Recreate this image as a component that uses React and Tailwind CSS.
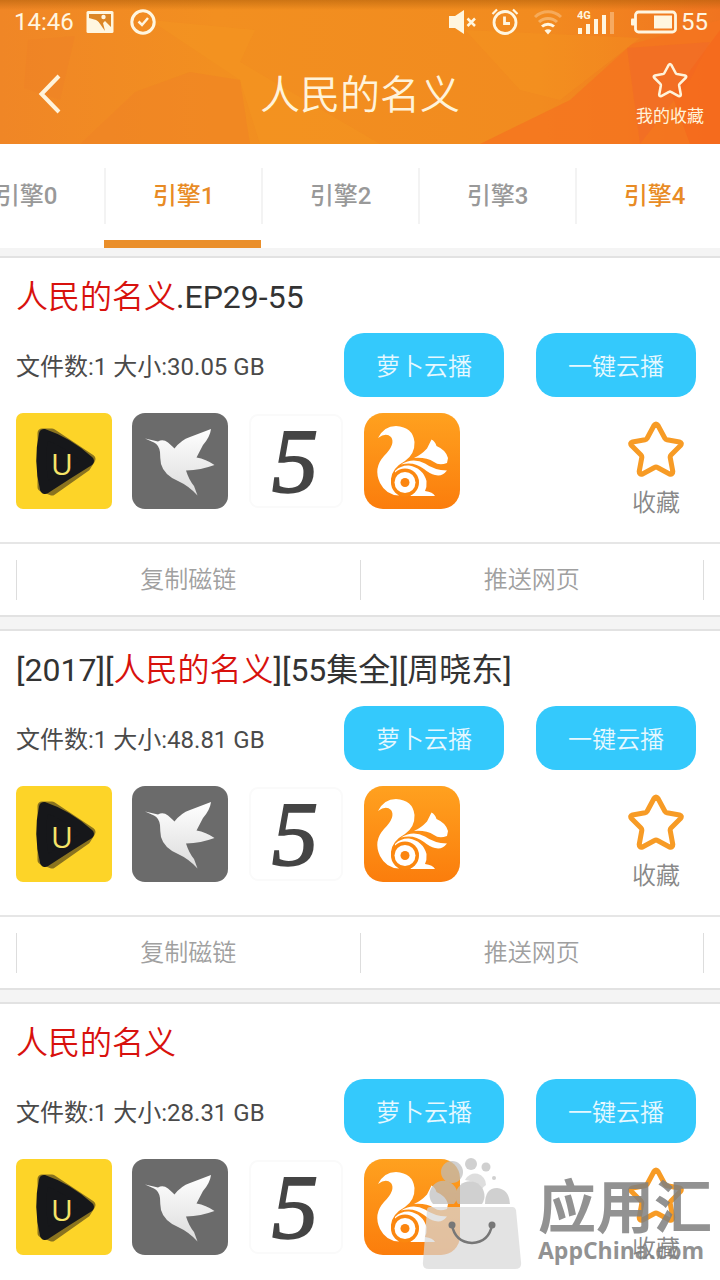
import { useState } from 'react';

const ENGINES = [
  { id: 0, label: '引擎0' },
  { id: 1, label: '引擎1' },
  { id: 2, label: '引擎2' },
  { id: 3, label: '引擎3' },
  { id: 4, label: '引擎4', hot: true }
];

const RESULTS = [
  { id: 1, before: '', after: '.EP29-55', files: 1, size: '30.05 GB' },
  { id: 2, before: '[2017][', after: '][55集全][周晓东]', files: 1, size: '48.81 GB' },
  { id: 3, before: '', after: '', files: 1, size: '28.31 GB' }
];

const KEYWORD = '人民的名义';

function StatusBar() {
  return (
    <div className="relative flex h-11 items-center justify-between pl-3.5 pr-3 text-2xl text-[#fff6e0]">
      <div className="flex items-center">
        <span>14:46</span>
        <svg className="ml-3 h-6 w-7" viewBox="0 0 28 24" fill="none">
          <rect x="0.5" y="1" width="27" height="22" rx="1.5" fill="#fff6e0" />
          <path d="M3 4h22v13L19 11l-3 3L10 10 3 8z" fill="#dc8626" />
          <path d="M12 11l7 10-2-8z" fill="#dc8626" />
          <circle cx="17.5" cy="7" r="2.2" fill="#fff6e0" />
        </svg>
        <svg className="ml-4 h-[26px] w-[26px]" viewBox="0 0 26 26" fill="none" stroke="#fff6e0">
          <circle cx="13" cy="13" r="11.2" strokeWidth="3" />
          <path d="M8.5 12.5l3.5 3.5 6-7" strokeWidth="2.5" />
        </svg>
      </div>
      <div className="flex items-center">
        <svg className="h-6 w-7" viewBox="0 0 28 24" fill="#fff6e0">
          <path d="M0 6h6L15 0v24l-9-6H0z" />
          <path d="M18.5 8.5l7.500 7.500M26 8.500l-7.500 7.500" stroke="#fff6e0" strokeWidth="2.5" />
        </svg>
        <svg className="ml-3.5 h-7 w-7" viewBox="0 0 28 28" fill="none" stroke="#fff6e0" strokeWidth="2.8">
          <circle cx="14" cy="14.500" r="11" />
          <path d="M13.500 8.500v7h5.500" />
          <path d="M1.500 6L6 1.500M22 1.500L26.500 6" strokeWidth="2.2" />
        </svg>
        <svg className="ml-3.5 h-7 w-[30px]" viewBox="0 0 30 28" fill="none" stroke="#fff6e0" strokeWidth="3">
          <path d="M2 9a19 19 0 0 1 26 0" opacity="0.3" />
          <path d="M6 14a13 13 0 0 1 18 0" opacity="0.35" />
          <path d="M9 18.500a9 9 0 0 1 12 0" />
          <path d="M11.500 22.500q3.500-2.500 7 0l-3.500 4z" fill="#fff6e0" stroke="none" />
        </svg>
        <svg className="ml-3.5 h-7 w-[38px]" viewBox="0 0 38 28" fill="#fff6e0">
          <text x="0" y="11" fontSize="11" fontWeight="700">4G</text>
          <rect x="1" y="20" width="4" height="6" />
          <rect x="9" y="16" width="4" height="10" />
          <rect x="17" y="11" width="4" height="15" />
          <rect x="25" y="7" width="4" height="19" />
          <rect x="33" y="4" width="4" height="22" opacity="0.35" />
        </svg>
        <svg className="ml-4 h-6 w-[46px]" viewBox="0 0 46 24" fill="#fff6e0">
          <rect x="4.500" y="2" width="40" height="20" rx="3" fill="none" stroke="#fff6e0" strokeWidth="2.8" />
          <rect x="0" y="8.500" width="4" height="7" rx="1" />
          <rect x="23" y="5.500" width="18" height="13" />
        </svg>
        <span className="ml-1">55</span>
      </div>
    </div>
  );
}

function Star({ className, strokeWidth }) {
  return (
    <svg className={className} viewBox="0 0 56 56" fill="none" stroke="currentColor" strokeWidth={strokeWidth} strokeLinejoin="round" strokeLinecap="round">
      <path d="M26 4.500Q28 1.500 30 4.500L37 17.500Q37.500 18.500 39 18.800L51.500 21Q54.500 21.800 52.500 24.500L43 34Q42 35 42.200 36.500L44.800 50.500Q44.800 54 41.500 53L29.500 46.500Q28 45.600 26.500 46.500L14.500 53Q11.200 54 11.200 50.500L13.800 36.500Q14 35 13 34L3.500 24.500Q1.500 21.800 4.500 21L17 18.800Q18.500 18.500 19 17.500Z" />
    </svg>
  );
}

function Header() {
  return (
    <header className="relative overflow-hidden bg-[#f28c20]">
      <svg className="absolute inset-0 h-full w-full" viewBox="0 0 720 144" preserveAspectRatio="none">
        <defs>
          <linearGradient id="base" x1="0" x2="1" y1="0" y2="0">
            <stop offset="0" stopColor="#f08626" />
            <stop offset="0.3" stopColor="#f28f20" />
            <stop offset="0.75" stopColor="#f28b1f" />
            <stop offset="1" stopColor="#f07420" />
          </linearGradient>
          <linearGradient id="shade" x1="0" x2="0" y1="0" y2="1">
            <stop offset="0" stopColor="#a85a08" stopOpacity="0.5" />
            <stop offset="1" stopColor="#a85a08" stopOpacity="0" />
          </linearGradient>
        </defs>
        <rect width="720" height="144" fill="url(#base)" />
        <path d="M80 144L135 92 190 72 240 80 250 144z" fill="#f08026" opacity="0.45" />
        <path d="M28 40L75 36 60 100 24 88z" fill="#ee7d28" opacity="0.3" />
        <path d="M150 20L255 30 240 62 380 144H260L240 80z" fill="#f59a22" opacity="0.3" />
        <path d="M465 30L640 38 560 100 520 90z" fill="#f69a20" opacity="0.25" />
        <path d="M480 144L570 100 632 44 720 20V144z" fill="#f5741f" opacity="0.8" />
        <path d="M627 48L710 42 690 80 640 144z" fill="#f0682a" opacity="0.45" />
        <path d="M720 30L672 95 690 144H720z" fill="#f5651d" opacity="0.6" />
        <rect width="720" height="10" fill="url(#shade)" />
      </svg>
      <StatusBar />
      <div className="relative grid h-[100px] grid-cols-[1fr_auto_1fr] items-center text-[#fff3da]">
        <button type="button" aria-label="返回" className="ml-9 w-7">
          <svg className="h-10 w-7" viewBox="0 0 28 40" fill="none" stroke="#fff3da" strokeWidth="4">
            <path d="M23 2L5.500 20 23 38" />
          </svg>
        </button>
        <h1 className="pt-1 text-[40px] font-[350] leading-none">{KEYWORD}</h1>
        <button type="button" className="mr-4 flex flex-col items-center justify-self-end">
          <Star className="h-9 w-9" strokeWidth="4" />
          <span className="mt-2 text-[17px] leading-5">我的收藏</span>
        </button>
      </div>
    </header>
  );
}

function EngineTabs({ active, onChange }) {
  return (
    <nav className="-ml-[53px] flex bg-white">
      {ENGINES.map((e) => (
        <button
          key={e.id}
          type="button"
          onClick={() => onChange(e.id)}
          className={`h-[104px] w-[157px] shrink-0 border-b-8 pt-2 text-2xl font-medium ${
            active === e.id ? 'border-[#ea8f2b]' : 'border-transparent'
          } ${active === e.id || e.hot ? 'text-[#e88b25]' : 'text-[#999]'}`}
        >
          <span className="flex h-14 items-center justify-center border-l-2 border-[#f3f3f3]">{e.label}</span>
        </button>
      ))}
    </nav>
  );
}

function PlayerIcon() {
  return (
    <svg className="h-24 w-24" viewBox="0 0 96 96">
      <rect width="96" height="96" rx="7" fill="#fdd428" />
      <path d="M26 20L36 20 75 46 70 54 36 78 26 74z" fill="#8a731f" stroke="#8a731f" strokeWidth="9" strokeLinejoin="round" />
      <path d="M28 21Q52 29 73 48Q52 61 29 76Q22 48 28 21z" fill="#16171a" stroke="#16171a" strokeWidth="10" strokeLinejoin="round" />
      <text x="46" y="62" textAnchor="middle" fontSize="30" fontFamily="Open Sans" fontWeight="400" fill="#f6e468">U</text>
    </svg>
  );
}

function BirdIcon() {
  return (
    <svg className="h-24 w-24" viewBox="0 0 96 96">
      <defs>
        <linearGradient id="bird" x1="0" x2="0" y1="0" y2="1">
          <stop offset="0" stopColor="#fff" />
          <stop offset="1" stopColor="#dcdcdc" />
        </linearGradient>
      </defs>
      <rect width="96" height="96" rx="13" fill="#6b6b6b" />
      <path d="M13 25.500L26 28.500Q31 25.500 36 29.500Q40 33 42.500 35.500Q49 27 58 24L79 16Q78 24 71 32L64.500 44.500Q74 46 82.500 52Q69 57 54 57.500Q57 67 62 73L65.500 82.500Q57 73 46 68Q32 62 29 51Q28 44 28 39Q27 32 22 29.500z" fill="url(#bird)" />
    </svg>
  );
}

function FiveIcon() {
  return (
    <svg className="h-24 w-24" viewBox="0 0 96 96">
      <rect x="2" y="2" width="92" height="92" rx="8" fill="#fff" stroke="#fafafa" strokeWidth="2" />
      <text x="47" y="79" textAnchor="middle" fontSize="92" fontStyle="italic" fontFamily="Liberation Serif" fill="#444" stroke="#444" strokeWidth="2">5</text>
    </svg>
  );
}

function SquirrelIcon() {
  return (
    <svg className="h-24 w-24" viewBox="0 0 96 96">
      <defs>
        <linearGradient id="fur" x1="0" x2="0" y1="0" y2="1">
          <stop offset="0" stopColor="#ffa11f" />
          <stop offset="1" stopColor="#fb7d0c" />
        </linearGradient>
      </defs>
      <rect width="96" height="96" rx="19" fill="url(#fur)" />
      <g fill="#fff">
        <path d="M14 25Q20 13 32 13Q49 14 50.500 29Q51 41 41 48Q28 55 27 66Q27 76 35 82.500Q22 82 16 70Q9 55 20 43Q32 31 27 24Q22 19 14 25z" />
        <path d="M50 45Q57 42 63 35.500L67.500 26.500Q71 28 72.500 33Q82 37 84 45L83 50Q75 53 70 49Q62 44 50 45z" />
        <path d="M37 51.500Q49 44 61 50.500Q70 57 83 57.500Q78 64 71 62Q66 61 60 56Q50 48 37 51.500z" />
        <path d="M31 58Q37 52 45 52.500Q59 55 62.500 68Q63 74 61 78Q69 79 71 83H46Q52 80 50 72L31 62z" />
      </g>
      <circle cx="41" cy="69.500" r="14" fill="#fb870f" />
      <circle cx="41" cy="69.500" r="10.500" fill="#fff" />
      <circle cx="41" cy="69.500" r="4.500" fill="#fb850f" />
    </svg>
  );
}

const PLAYERS = [
  { name: 'U播', Icon: PlayerIcon },
  { name: '迅雷', Icon: BirdIcon },
  { name: '115', Icon: FiveIcon },
  { name: 'UC', Icon: SquirrelIcon }
];

function CloudButton({ children }) {
  return (
    <button type="button" className="h-16 w-40 rounded-[20px] bg-[#34c9fc] pt-1 text-2xl font-[350] text-[#e6f8ff]">
      {children}
    </button>
  );
}

function ResultCard({ item }) {
  return (
    <article className="border-y-2 border-[#e2e2e2] bg-white">
      <h2 className="px-4 pt-4 text-[32px] font-normal leading-[46px] text-[#333]">
        {item.before}
        <span className="font-[350] text-[#d8110d]">{KEYWORD}</span>
        {item.after}
      </h2>
      <div className="mt-[13px] flex items-center justify-between pl-4 pr-6">
        <p className="pt-1 text-2xl font-normal text-[#4a4a4a]">
          文件数:{item.files} 大小:{item.size}
        </p>
        <div className="flex gap-8">
          <CloudButton>萝卜云播</CloudButton>
          <CloudButton>一键云播</CloudButton>
        </div>
      </div>
      <div className="flex items-start justify-between pb-[27px] pl-4 pr-8 pt-4">
        <div className="flex gap-5">
          {PLAYERS.map(({ name, Icon }) => (
            <button key={name} type="button" aria-label={name}>
              <Icon />
            </button>
          ))}
        </div>
        <button type="button" className="flex w-16 flex-col items-center pt-2">
          <Star className="h-14 w-14 text-[#f79b25]" strokeWidth="5" />
          <span className="mt-3.5 text-2xl font-[350] leading-6 text-[#888]">收藏</span>
        </button>
      </div>
      <div className="flex h-[73px] items-center border-t-2 border-[#e6e6e6] px-4 text-2xl font-[350] text-[#a0a0a0]">
        <button type="button" className="h-10 flex-1 border-l border-[#ddd]">复制磁链</button>
        <button type="button" className="h-10 flex-1 border-x border-[#ddd]">推送网页</button>
      </div>
    </article>
  );
}

function Watermark() {
  return (
    <div className="pointer-events-none absolute bottom-2.5 right-2 flex items-end gap-4">
      <svg className="h-[114px] w-[100px]" viewBox="0 0 100 114">
        <g fill="#bdbdbd" opacity="0.7">
          <circle cx="49" cy="8" r="6" />
          <circle cx="64" cy="11" r="4.500" />
          <circle cx="72" cy="22" r="2" />
          <circle cx="30" cy="16" r="11" />
          <path d="M11 48a14 14 0 1 1 21 0z" />
          <path d="M43 24a11 11 0 0 1 21 5q-3 2-4 4q-6-8-17-9z" opacity="0.7" />
          <path d="M36 48a14.500 14.500 0 1 1 24 0z" />
          <path d="M63 48q0-16 12-16q12 1 13 16z" />
        </g>
        <path d="M8 51h83q2 0 3 3l5 52q1 7-6 7H7q-7 0-6-7l4-52q0-3 3-3z" fill="#d8d8d8" opacity="0.72" />
        <path d="M30 69q3 17 20 18q17-1 20-18" fill="none" stroke="#777" strokeWidth="2.500" />
        <circle cx="30" cy="69" r="3.500" fill="#777" />
        <circle cx="70" cy="69" r="3.500" fill="#777" />
      </svg>
      <div className="mb-2 text-[#808080] opacity-85">
        <p className="text-[58px] font-bold leading-[60px]">应用汇</p>
        <p className="font-['Open_Sans'] text-[23px] font-bold leading-6">AppChina.com</p>
      </div>
    </div>
  );
}

export default function App() {
  const [engine, setEngine] = useState(1);

  return (
    <div className="relative flex h-screen flex-col overflow-hidden bg-[#f4f4f4] font-[Roboto,'Noto_Sans_CJK_SC',sans-serif]">
      <Header />
      <EngineTabs active={engine} onChange={setEngine} />
      <main className="mt-2 flex min-h-0 flex-1 flex-col gap-3 overflow-hidden">
        {RESULTS.map((item) => (
          <div key={item.id} className="shrink-0">
            <ResultCard item={item} />
          </div>
        ))}
      </main>
      <Watermark />
    </div>
  );
}
